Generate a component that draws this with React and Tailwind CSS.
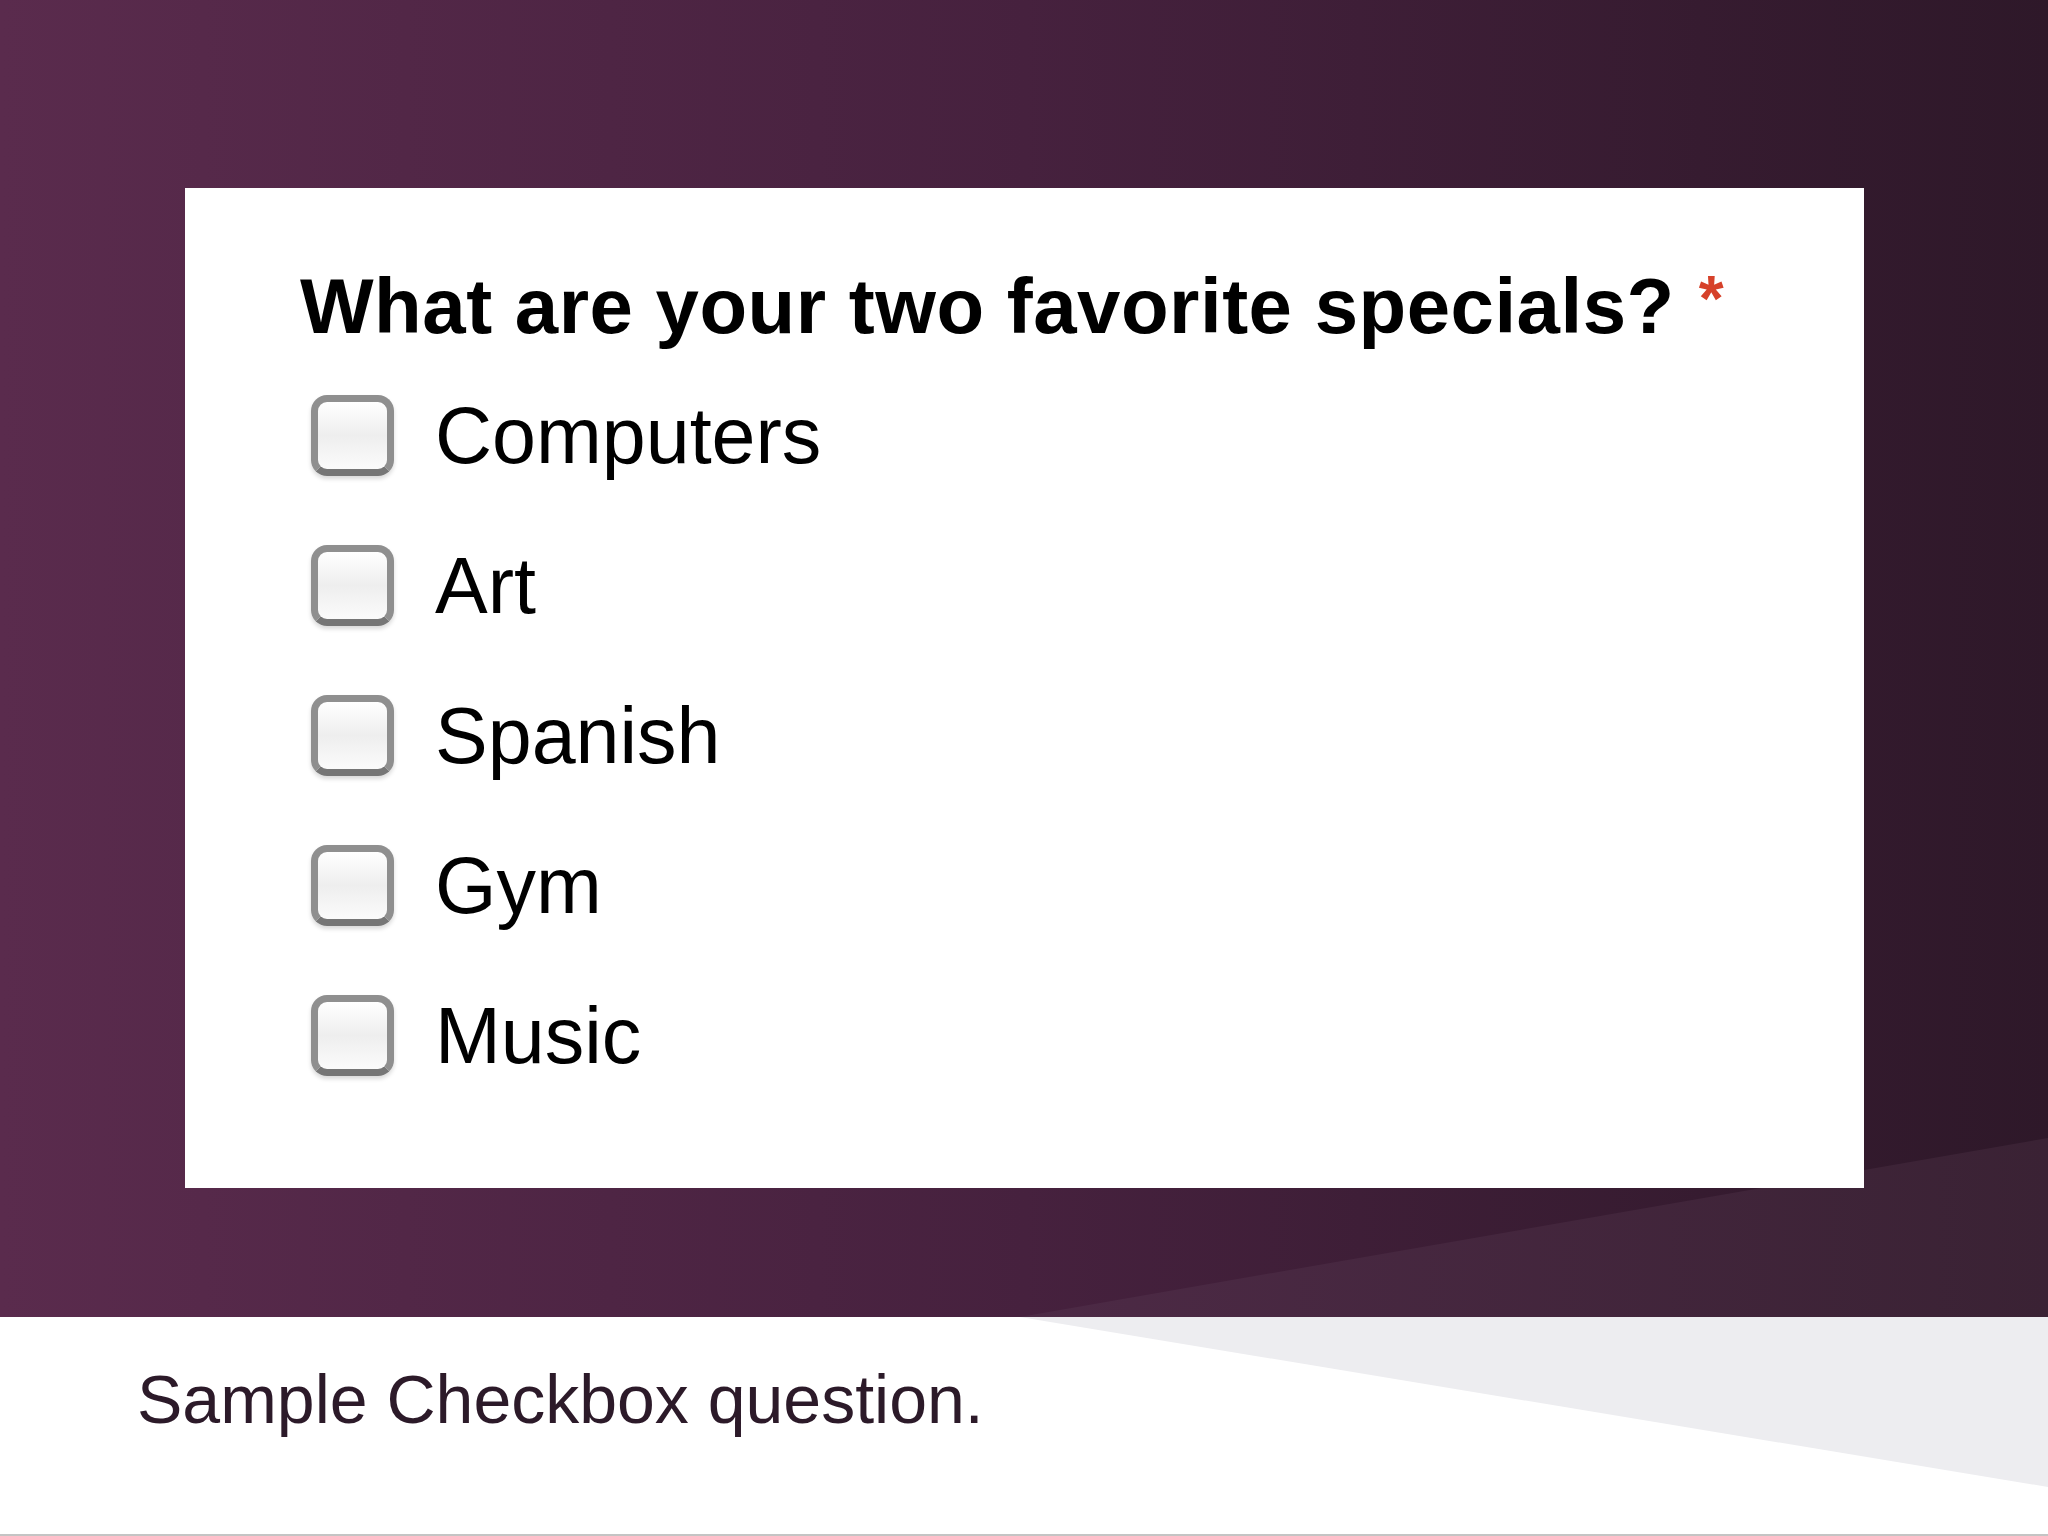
const options = ["Computers", "Art", "Spanish", "Gym", "Music"];

function Box() {
  return (
    <div className="ml-[11px] w-[83px] h-[81px] shrink-0 rounded-[16px] border-[7px] border-[#8f8f8f] border-b-[#767676] bg-gradient-to-b from-white via-[#eeeeee] to-[#fbfbfb] shadow-[0_3px_4px_rgba(0,0,0,0.15)]"></div>
  );
}

export default function App() {
  return (
    <div className="w-[2048px] h-[1536px] flex flex-col overflow-hidden font-['Liberation_Sans',Arial,sans-serif]">
      <div className="relative h-[1317px] shrink-0 bg-gradient-to-r from-[#5a2b4d] via-[#46213e] to-[#2e1829] pt-[188px] pl-[185px]">
        <svg className="absolute inset-0 pointer-events-none" width="2048" height="1317" viewBox="0 0 2048 1317">
          <defs>
            <linearGradient id="band" x1="0" x2="1" y1="0" y2="0">
              <stop offset="0" stopColor="#4d2a46" />
              <stop offset="1" stopColor="#3a2234" />
            </linearGradient>
          </defs>
          <polygon points="1020,1317 2048,1138 2048,1317" fill="url(#band)" />
        </svg>

        <div className="relative w-[1679px] h-[1000px] bg-white pt-[79px] pl-[115px]">
          <h2 className="text-[78px] font-bold leading-none tracking-[0.5px] text-black">
            What are your two favorite specials?
            <span className="relative -top-[12px] ml-[24px] text-[64px] leading-none text-[#d6412a]">*</span>
          </h2>
          <div className="mt-[15px] flex flex-col">
            {options.map((o) => (
              <div key={o} className="h-[150px] flex items-center">
                <Box />
                <span className="ml-[41px] text-[79px] leading-none text-black">{o}</span>
              </div>
            ))}
          </div>
        </div>
      </div>

      <div className="relative flex-1 bg-white border-b-2 border-[#c4c4c4] pt-[48px] pl-[137px]">
        <svg className="absolute inset-0 pointer-events-none" width="2048" height="217" viewBox="0 0 2048 217">
          <polygon points="1020,0 2048,0 2048,170" fill="#ededf0" />
        </svg>
        <p className="relative text-[68px] leading-none text-[#2c1a29]">Sample Checkbox question.</p>
      </div>
    </div>
  );
}
